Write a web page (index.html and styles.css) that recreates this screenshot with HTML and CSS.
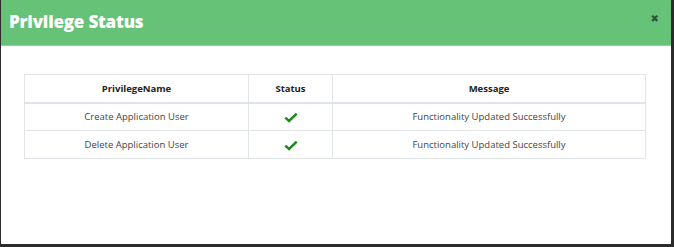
FILE: index.html
```html
<!DOCTYPE html>
<html>
<head>
<meta charset="utf-8">
<link rel="stylesheet" href="styles.css">
</head>
<body>
<div class="frame">
  <div class="modal">
    <div class="modal-header">
      <h2 class="title">Privilege Status</h2>
      <span class="close">&#x2716;</span>
    </div>
    <div class="modal-body">
      <table class="status-table">
        <thead>
          <tr>
            <th class="col-name">PrivilegeName</th>
            <th class="col-status">Status</th>
            <th class="col-msg">Message</th>
          </tr>
        </thead>
        <tbody>
          <tr>
            <td>Create Application User</td>
            <td><svg class="check" viewBox="0 0 16 12" width="14" height="11"><path d="M1.5 6.2 L5.8 10 L14.5 1.6" fill="none" stroke="#1e8a1e" stroke-width="2.8" stroke-linecap="butt" stroke-linejoin="miter"/></svg></td>
            <td>Functionality Updated Successfully</td>
          </tr>
          <tr>
            <td>Delete Application User</td>
            <td><svg class="check" viewBox="0 0 16 12" width="14" height="11"><path d="M1.5 6.2 L5.8 10 L14.5 1.6" fill="none" stroke="#1e8a1e" stroke-width="2.8" stroke-linecap="butt" stroke-linejoin="miter"/></svg></td>
            <td>Functionality Updated Successfully</td>
          </tr>
        </tbody>
      </table>
    </div>
  </div>
</div>
</body>
</html>
```

FILE: styles.css
```css
* { box-sizing: border-box; }
html, body { margin: 0; padding: 0; background: #fff; }
.frame {
  width: 674px;
  height: 247px;
  border-left: 1px solid #2b2b2b;
  border-right: 3px solid #2b2b2b;
  border-bottom: 3px solid #2b2b2b;
  background: #fff;
  overflow: hidden;
}
.modal { width: 100%; height: 100%; }
.modal-header {
  height: 46px;
  background: #66c277;
  display: flex;
  align-items: center;
  justify-content: space-between;
  padding: 0 12px 2px 8px;
  border-bottom: 1px solid #8fd29b;
}
.title {
  margin: 0;
  color: #fff;
  font-family: "Open Sans", "DejaVu Sans", sans-serif;
  font-weight: 800;
  font-size: 17px;
  letter-spacing: -0.2px;
}
.close {
  color: #2e5537;
  font-family: "DejaVu Sans", sans-serif;
  font-size: 10px;
  font-weight: bold;
  margin-top: -6px;
}
.modal-body {
  padding: 28px 28px 0 23px;
}
.status-table {
  width: 622px;
  border-collapse: collapse;
  font-family: "Open Sans", "DejaVu Sans", sans-serif;
  font-size: 9.5px;
  color: #444;
}
.status-table th, .status-table td {
  border: 1px solid #e1e4e8;
  text-align: center;
  height: 28px;
  padding: 0 6px;
}
.status-table th {
  font-weight: 700;
  color: #222;
  border-bottom: 2px solid #dfe3ea;
}
.col-name { width: 224px; }
.col-status { width: 84px; }
.check { display: block; margin: 1px auto 0; }
```
